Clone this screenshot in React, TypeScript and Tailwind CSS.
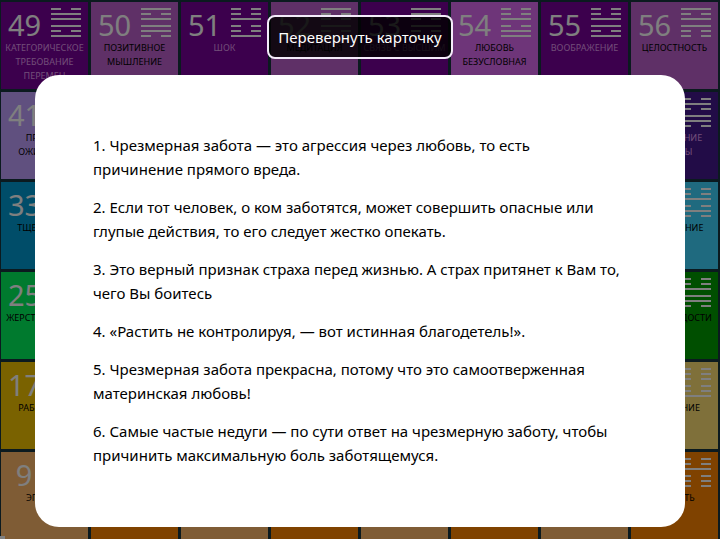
import React from "react";

type Tile = { n: number; lines?: string[]; hex?: string; bg: string; tone?: string };

const PURPLE = "bg-[#78009a]";
const PLUM = "bg-[#be60ce]";
const DARK = "text-black";
const PINK = "text-[#e29cf0]";

// Builds a row of eight tiles; the tiles between the first and the last stay blank.
const row = (from: number, odd: string, even: string, tone: string, first: Partial<Tile>, last: Partial<Tile>): Tile[] =>
  Array.from({ length: 8 }, (_, i) => ({
    n: from + i,
    bg: i % 2 ? even : odd,
    tone,
    ...(i === 0 ? first : i === 7 ? last : {}),
  }));

// Hexagram codes run from top to bottom: 1 is a solid line, 0 a broken one.
const tiles: Tile[] = [
  { n: 49, lines: ["КАТЕГОРИЧЕСКОЕ", "ТРЕБОВАНИЕ", "ПЕРЕМЕН"], hex: "011101", bg: PURPLE, tone: PINK },
  { n: 50, lines: ["ПОЗИТИВНОЕ", "МЫШЛЕНИЕ"], hex: "101110", bg: PLUM, tone: DARK },
  { n: 51, lines: ["ШОК"], hex: "001001", bg: PURPLE, tone: PINK },
  { n: 52, lines: ["МЕДИТАЦИЯ"], hex: "100100", bg: PLUM, tone: DARK },
  { n: 53, lines: ["СВЯЗЬ С ВЫСШИМ"], hex: "110100", bg: PURPLE, tone: PINK },
  { n: 54, lines: ["ЛЮБОВЬ", "БЕЗУСЛОВНАЯ"], hex: "001011", bg: "bg-[#dc6af2]", tone: DARK },
  { n: 55, lines: ["ВООБРАЖЕНИЕ"], hex: "001101", bg: PURPLE, tone: PINK },
  { n: 56, lines: ["ЦЕЛОСТНОСТЬ"], hex: "101100", bg: PLUM, tone: DARK },
  ...row(41, "bg-[#c0a0fe]", "bg-[#44188e]", DARK, { lines: ["ПРИЗЫВ", "ОЖИДАНИЕ"], hex: "100011" }, { lines: ["ИЗМЕНЕНИЕ", "СУДЬБЫ"], hex: "010110", tone: PINK }),
  ...row(33, "bg-[#009ad2]", "bg-[#3ed4ff]", DARK, { lines: ["ТЩЕСЛАВИЕ"], hex: "111100" }, { lines: ["ОБЛЕГЧЕНИЕ"], hex: "001010" }),
  ...row(25, "bg-[#00f45c]", "bg-[#009e00]", DARK, { lines: ["ЖЕРСТВЕННОСТЬ"], hex: "111001" }, { lines: ["ПУТЬ К РАДОСТИ"], hex: "001110" }),
  ...row(17, "bg-[#f4c400]", "bg-[#ffe074]", DARK, { lines: ["РАБОЛЕПИЕ"], hex: "011001" }, { lines: ["СОМНЕНИЕ"], hex: "000001" }),
  ...row(9, "bg-[#ffb86a]", "bg-[#fe8400]", DARK, { lines: ["ЭГОИЗМ"], hex: "110111" }, { lines: ["РАДОСТЬ"], hex: "001000" }),
];

const notes = [
  "1. Чрезмерная забота — это агрессия через любовь, то есть причинение прямого вреда.",
  "2. Если тот человек, о ком заботятся, может совершить опасные или глупые действия, то его следует жестко опекать.",
  "3. Это верный признак страха перед жизнью. А страх притянет к Вам то, чего Вы боитесь",
  "4. «Растить не контролируя, — вот истинная благодетель!».",
  "5. Чрезмерная забота прекрасна, потому что это самоотверженная материнская любовь!",
  "6. Самые частые недуги — по сути ответ на чрезмерную заботу, чтобы причинить максимальную боль заботящемуся.",
];

function Hexagram({ code }: { code: string }) {
  return (
    <svg viewBox="0 0 30 29" className="h-[29px] w-[30px] fill-white" shapeRendering="crispEdges" aria-hidden="true">
      {code.split("").map((c, i) => {
        const y = [0, 5, 10, 17, 22, 27][i];
        return c === "1" ? (
          <rect key={i} x="0" y={y} width="30" height="2" />
        ) : (
          <g key={i}>
            <rect x="0" y={y} width="10" height="2" />
            <rect x="20" y={y} width="10" height="2" />
          </g>
        );
      })}
    </svg>
  );
}

function Cell({ tile }: { tile: Tile }) {
  return (
    <div className={`aspect-square overflow-hidden pt-1.5 ${tile.bg}`}>
      {tile.lines && (
        <>
          <div className="flex items-start justify-between px-[7px]">
            <span className="w-8 text-center text-[29px] leading-[33px] text-white">{tile.n}</span>
            {tile.hex && <Hexagram code={tile.hex} />}
          </div>
          <p className={`flex flex-col items-center text-[9px] leading-[14px] whitespace-nowrap ${tile.tone}`}>
            {tile.lines.map((line) => <span key={line}>{line}</span>)}
          </p>
        </>
      )}
    </div>
  );
}

export default function App() {
  return (
    <main className="relative h-screen overflow-hidden bg-[#16343e] font-['Noto_Sans',sans-serif]">
      <div className="grid grid-cols-8 gap-[3px] pt-0.5 pr-0.5 pl-px">
        {tiles.map((tile) => <Cell key={tile.n} tile={tile} />)}
      </div>
      <div className="absolute bottom-0 left-0 h-[3px] w-[5px] bg-white" />
      <div className="absolute inset-0 flex flex-col items-center bg-black/50 px-[35px] pt-[15px] pb-3">
        <button type="button" className="h-11 shrink-0 rounded-lg border-2 border-[#f4ecfa] bg-black/80 px-[9px] text-[15px] text-white">
          Перевернуть карточку
        </button>
        <section className="mt-4 w-full flex-1 space-y-3.5 rounded-[24px] bg-white pt-[58px] pr-[62px] pl-[58px] text-[15px] leading-6 text-black">
          {notes.map((note) => <p key={note}>{note}</p>)}
        </section>
      </div>
    </main>
  );
}
